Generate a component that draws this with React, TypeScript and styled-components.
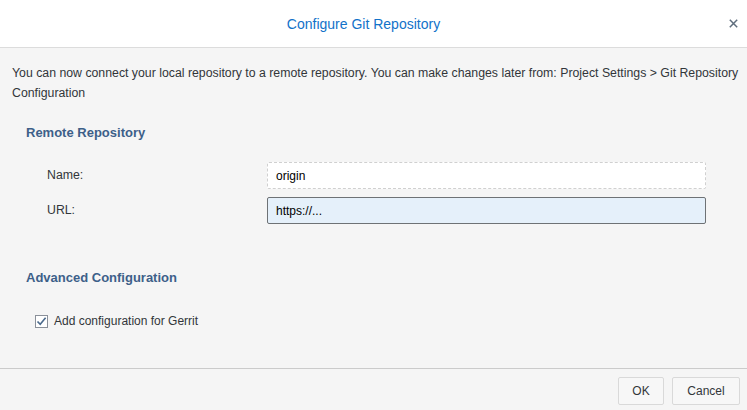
import styled, { createGlobalStyle } from "styled-components";

const GlobalStyle = createGlobalStyle`
  html, body {
    margin: 0;
    padding: 0;
    background: #f5f5f5;
  }
  body {
    font-family: "Liberation Sans", Arial, sans-serif;
    font-size: 12px;
    color: #32363a;
  }
`;

const Dialog = styled.div`
  height: 100vh;
  display: flex;
  flex-direction: column;
  background: #f5f5f5;
`;

const Header = styled.div`
  position: relative;
  height: 47px;
  flex-shrink: 0;
  background: #ffffff;
  border-bottom: 1px solid #dcdcdc;
  display: flex;
  align-items: center;
  justify-content: center;
`;

const Title = styled.h1`
  margin: 0 0 0 -20px;
  font-size: 14px;
  font-weight: normal;
  color: #1272c9;
`;

const CloseButton = styled.button`
  position: absolute;
  right: 8px;
  top: 17px;
  width: 12px;
  height: 12px;
  padding: 0;
  border: none;
  background: transparent;
  display: flex;
  align-items: center;
  justify-content: center;
  cursor: pointer;
`;

const Body = styled.div`
  flex: 1;
  padding: 15px 6px 0 12px;
`;

const Intro = styled.p`
  margin: 0;
  font-size: 12.3px;
  line-height: 20px;
`;

const Section = styled.section<{ top: number }>`
  margin-top: ${(props) => props.top}px;
  padding-left: 14px;
`;

const SectionTitle = styled.h2`
  margin: 0;
  font-size: 13px;
  line-height: 20px;
  font-weight: bold;
  color: #3d6089;
`;

const Fields = styled.div`
  margin-top: 19px;
  padding-left: 21px;
  display: grid;
  grid-template-columns: 220px 439px;
  row-gap: 8px;
  align-items: center;
`;

const Label = styled.label`
  font-size: 12.3px;
  line-height: 27px;
`;

const Input = styled.input<{ focused?: boolean }>`
  box-sizing: border-box;
  height: 27px;
  width: 100%;
  margin: 0;
  padding: 0 8px;
  font-family: inherit;
  font-size: 12px;
  color: #000;
  border-radius: 2px;
  outline: none;
  background: ${(props) => (props.focused ? "#e5f0fa" : "#ffffff")};
  border: 1px ${(props) => (props.focused ? "solid #6e7275" : "dashed #d0d0d0")};
`;

const CheckRow = styled.label`
  margin-top: 23px;
  padding-left: 9px;
  display: flex;
  align-items: center;
  gap: 6px;
  line-height: 20px;
`;

const Box = styled.span`
  box-sizing: border-box;
  width: 13px;
  height: 13px;
  border: 1px solid #8a9099;
  background: #ffffff;
  display: flex;
  align-items: center;
  justify-content: center;
`;

const Footer = styled.div`
  height: 41px;
  flex-shrink: 0;
  border-top: 1px solid #cbcbcb;
  display: flex;
  align-items: center;
  justify-content: flex-end;
  gap: 8px;
  padding: 0 7px 0 0;
`;

const Button = styled.button<{ w: number }>`
  box-sizing: border-box;
  width: ${(props) => props.w}px;
  height: 28px;
  margin-top: 2px;
  background: #f7f7f7;
  border: 1px solid #d9d9d9;
  border-radius: 2px;
  font-family: inherit;
  font-size: 12px;
  color: #32363a;
  cursor: pointer;
`;

function App() {
  return (
    <Dialog>
      <GlobalStyle />
      <Header>
        <Title>Configure Git Repository</Title>
        <CloseButton aria-label="close">
          <svg width="9" height="9" viewBox="0 0 9 9">
            <path d="M0.8 0.8 L8.2 8.2 M8.2 0.8 L0.8 8.2" stroke="#5f6e7d" strokeWidth="1.5" />
          </svg>
        </CloseButton>
      </Header>
      <Body>
        <Intro>
          You can now connect your local repository to a remote repository. You can make changes later from: Project
          Settings &gt; Git Repository Configuration
        </Intro>
        <Section top={20}>
          <SectionTitle>Remote Repository</SectionTitle>
          <Fields>
            <Label>Name:</Label>
            <Input defaultValue="origin" />
            <Label>URL:</Label>
            <Input focused defaultValue="https://..." />
          </Fields>
        </Section>
        <Section top={44}>
          <SectionTitle>Advanced Configuration</SectionTitle>
          <CheckRow>
            <Box>
              <svg width="11" height="11" viewBox="0 0 11 11">
                <path d="M1.5 5.5 L4.2 8.3 L9.6 1.8" fill="none" stroke="#4b6a8c" strokeWidth="1.6" />
              </svg>
            </Box>
            Add configuration for Gerrit
          </CheckRow>
        </Section>
      </Body>
      <Footer>
        <Button w={46}>OK</Button>
        <Button w={68}>Cancel</Button>
      </Footer>
    </Dialog>
  );
}

export default App;
